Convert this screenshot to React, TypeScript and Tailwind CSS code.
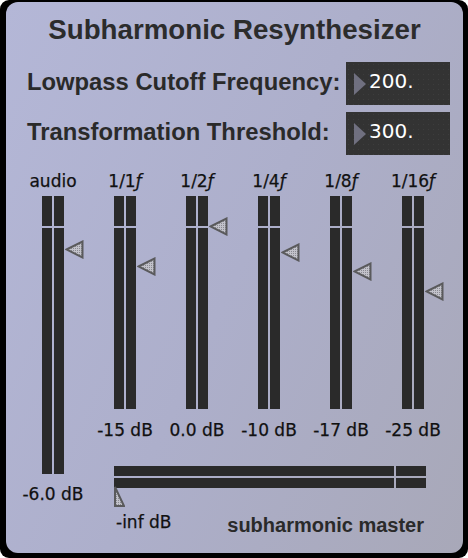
import React from "react";

const Tri = ({ top }: { top: number }) => (
  <svg
    className="absolute left-[23px]"
    style={{ top }}
    width="19"
    height="19"
    viewBox="0 0 19 19"
  >
    <defs>
      <pattern id={`dots${top}`} width="2" height="2" patternUnits="userSpaceOnUse">
        <rect width="2" height="2" fill="#c2c2ca" />
        <rect width="1" height="1" fill="#8a8a92" />
      </pattern>
    </defs>
    <polygon
      points="1.5,9.5 17.5,1.5 17.5,17.5"
      fill={`url(#dots${top})`}
      stroke="#5a5a5c"
      strokeWidth="2"
    />
  </svg>
);

const Meter = ({ h, tri }: { h: string; tri: number }) => (
  <div className={`relative flex gap-[2px] w-[22px] ${h}`}>
    {[0, 1].map((i) => (
      <div key={i} className="flex flex-col gap-[2px] w-[10px]">
        <div className="h-[30px] bg-[#2a2a2a]" />
        <div className="flex-1 bg-[#2a2a2a]" />
      </div>
    ))}
    <Tri top={tri} />
  </div>
);

const small =
  "font-['DejaVu_Sans',sans-serif] text-[17px] leading-[20px] text-[#111111] [-webkit-text-stroke:0.25px_#111111] whitespace-nowrap";

const Column = ({ label, db, tri }: { label: string; db: string; tri: number }) => (
  <div className="flex flex-col items-center w-[72px]">
    <div className={small}>
      {label}
      <span className="italic">ƒ</span>
    </div>
    <div className="mt-[5px]">
      <Meter h="h-[213px]" tri={tri} />
    </div>
    <div className={`${small} mt-[11px]`}>{db}</div>
  </div>
);

const NumBox = ({ value }: { value: string }) => (
  <div className="w-[104px] h-[43px] bg-[#333333] bg-[radial-gradient(#3d3d3d_0.6px,transparent_0.8px)] bg-[length:5px_5px] flex items-center pl-[8px]">
    <svg width="12" height="22" viewBox="0 0 12 22">
      <polygon points="0,0 12,11 0,22" fill="#707080" />
    </svg>
    <span className="ml-[3px] mb-[6px] font-['DejaVu_Sans',sans-serif] text-[20px] leading-[20px] text-white">
      {value}
    </span>
  </div>
);

const bold = "font-['Liberation_Sans',Arial,sans-serif] font-bold text-[#2a2a2a]";

export default function App() {
  return (
    <div className="w-[468px] h-[558px] bg-white">
      <div className="w-full h-full bg-black rounded-[9px] pl-[6px] pt-[2px] pr-[5px] pb-[5px]">
        <div className="h-full rounded-[12px] bg-[linear-gradient(115deg,#b4b7d7_0%,#adafcb_50%,#a8a8b8_100%)] flex flex-col">
          <div className={`${bold} mt-[14px] h-[28px] text-[27.7px] leading-[28px] text-center text-[#2c2c2c]`}>
            Subharmonic Resynthesizer
          </div>

          <div className="mt-[18px] flex items-center justify-between pl-[21px] pr-[13px]">
            <div className={`${bold} text-[23.8px] leading-[24px] mb-[4px]`}>Lowpass Cutoff Frequency:</div>
            <NumBox value="200." />
          </div>
          <div className="mt-[7px] flex items-center justify-between pl-[21px] pr-[13px]">
            <div className={`${bold} text-[23.8px] leading-[24px] mb-[4px]`}>Transformation Threshold:</div>
            <NumBox value="300." />
          </div>

          <div className="mt-[16px] pl-[11px] flex">
            <div className="flex flex-col items-center w-[72px]">
              <div className={small}>audio</div>
              <div className="mt-[5px]">
                <Meter h="h-[278px]" tri={44} />
              </div>
              <div className={`${small} mt-[10px]`}>-6.0 dB</div>
            </div>

            <div className="flex flex-col">
              <div className="flex">
                <Column label="1/1" db="-15 dB" tri={61} />
                <Column label="1/2" db="0.0 dB" tri={21} />
                <Column label="1/4" db="-10 dB" tri={47} />
                <Column label="1/8" db="-17 dB" tri={66} />
                <Column label="1/16" db="-25 dB" tri={86} />
              </div>

              <div className="ml-[25px] w-[312px] mt-[26px] flex flex-col">
                <div className="flex flex-col gap-[2px]">
                  {[0, 1].map((i) => (
                    <div key={i} className="flex gap-[2px] h-[10px]">
                      <div className="flex-1 bg-[#2a2a2a]" />
                      <div className="w-[30px] bg-[#2a2a2a]" />
                    </div>
                  ))}
                </div>
                <svg className="-mt-[2px]" width="11" height="21" viewBox="0 0 11 21">
                  <defs>
                    <pattern id="mdots" width="2" height="2" patternUnits="userSpaceOnUse">
                      <rect width="2" height="2" fill="#c2c2ca" />
                      <rect width="1" height="1" fill="#8a8a92" />
                    </pattern>
                  </defs>
                  <polygon points="1,1 1,20 10,20" fill="url(#mdots)" stroke="#5a5a5c" strokeWidth="2" />
                </svg>
                <div className="mt-[5px] flex justify-between items-start">
                  <div className={`${small} ml-[2px]`}>-inf dB</div>
                  <div className={`${bold} text-[20px] leading-[20px] mt-[3px] mr-[2px]`}>subharmonic master</div>
                </div>
              </div>
            </div>
          </div>
        </div>
      </div>
    </div>
  );
}
